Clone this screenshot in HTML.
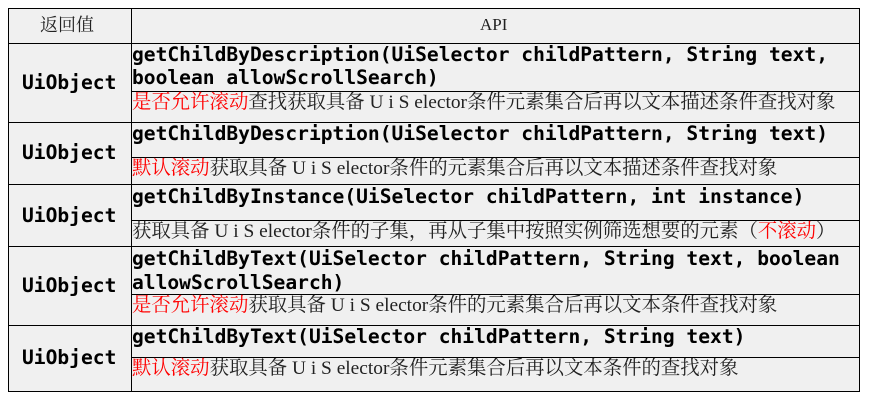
<!DOCTYPE html>
<html><head><meta charset="utf-8"><style>
body{margin:0;width:869px;height:401px;background:#fff;position:relative;overflow:hidden}
.t{position:absolute;left:8px;top:8px;width:850px;height:382px;background:#f0f0f0;border:1px solid #000}
.h{position:absolute;height:1px;background:#000}
.v{position:absolute;width:1px;background:#000}
.m{position:absolute;font-family:"DejaVu Sans Mono","Liberation Mono",monospace;font-weight:bold;font-size:19.6px;line-height:24px;white-space:pre;color:#000}
.c{position:absolute;font-family:"Liberation Serif","Noto Serif CJK SC",serif;font-size:19.4px;line-height:22px;white-space:pre;color:#222}
.r{color:#f00}
</style></head><body>
<div class="t"></div>
<div class="v" style="left:131px;top:8px;height:383px"></div>
<div class="h" style="left:8px;width:851px;top:43px"></div>
<div class="h" style="left:8px;width:851px;top:122px"></div>
<div class="h" style="left:8px;width:851px;top:184px"></div>
<div class="h" style="left:8px;width:851px;top:246px"></div>
<div class="h" style="left:8px;width:851px;top:325px"></div>
<div class="h" style="left:131px;width:728px;top:91px"></div>
<div class="h" style="left:131px;width:728px;top:157px"></div>
<div class="h" style="left:131px;width:728px;top:220px"></div>
<div class="h" style="left:131px;width:728px;top:294px"></div>
<div class="h" style="left:131px;width:728px;top:357px"></div>

<div class="c" style="left:40px;top:14px;font-size:18px">返回值</div>
<div class="c" style="left:480px;top:14px;font-size:17px">API</div>

<div class="m" style="left:22px;top:71px">UiObject</div>
<div class="m" style="left:22px;top:141px">UiObject</div>
<div class="m" style="left:22px;top:204px">UiObject</div>
<div class="m" style="left:22px;top:274px">UiObject</div>
<div class="m" style="left:22px;top:346px">UiObject</div>

<div class="m" style="left:132px;top:43px">getChildByDescription(UiSelector childPattern, String text,</div>
<div class="m" style="left:132px;top:66px">boolean allowScrollSearch)</div>
<div class="c" style="left:132px;top:92px"><span class="r">是否允许滚动</span>查找获取具备 U i S elector条件元素集合后再以文本描述条件查找对象</div>

<div class="m" style="left:132px;top:122px">getChildByDescription(UiSelector childPattern, String text)</div>
<div class="c" style="left:132px;top:158px"><span class="r">默认滚动</span>获取具备 U i S elector条件的元素集合后再以文本描述条件查找对象</div>

<div class="m" style="left:132px;top:185px">getChildByInstance(UiSelector childPattern, int instance)</div>
<div class="c" style="left:132px;top:221px">获取具备 U i S elector条件的子集，再从子集中按照实例筛选想要的元素（<span class="r">不滚动</span>）</div>

<div class="m" style="left:132px;top:247px">getChildByText(UiSelector childPattern, String text, boolean</div>
<div class="m" style="left:132px;top:271px">allowScrollSearch)</div>
<div class="c" style="left:132px;top:295px"><span class="r">是否允许滚动</span>获取具备 U i S elector条件的元素集合后再以文本条件查找对象</div>

<div class="m" style="left:132px;top:325px">getChildByText(UiSelector childPattern, String text)</div>
<div class="c" style="left:132px;top:358px"><span class="r">默认滚动</span>获取具备 U i S elector条件元素集合后再以文本条件的查找对象</div>
</body></html>
